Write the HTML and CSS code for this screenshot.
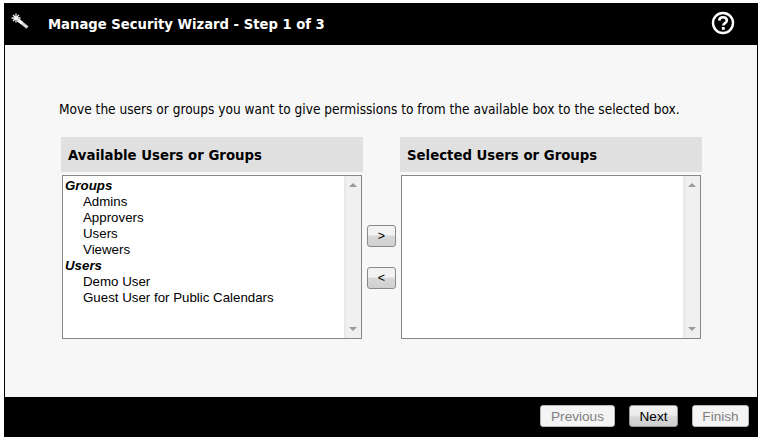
FILE: index.html
```html
<!DOCTYPE html>
<html lang="en">
<head>
<meta charset="utf-8">
<title>Manage Security Wizard</title>
<link rel="stylesheet" href="styles.css">
</head>
<body>
<div class="wizard">
  <header class="topbar">
    <svg class="wand" width="20" height="20" viewBox="0 0 20 20" aria-hidden="true">
      <path d="M8 8 L17.500 15.500" stroke="#d8d8d8" stroke-width="3"/>
      <path d="M8 8 L12 11.200" stroke="#fff" stroke-width="3"/>
      <path d="M6 1.500v9M1.500 6h9M3 3l6 6M9 3l-6 6" stroke="#f4f4fa" stroke-width="1.300"/>
    </svg>
    <h1 class="title">Manage Security Wizard - Step 1 of 3</h1>
    <svg class="help" width="24" height="24" viewBox="0 0 24 24" aria-hidden="true">
      <circle cx="12" cy="12" r="10" fill="none" stroke="#fff" stroke-width="2.400"/>
      <path d="M8.200 9.600C8.400 7.300 10 6.300 12 6.300c2.300 0 3.800 1.300 3.800 3.200 0 2.600-3.500 2.600-3.500 5.100" fill="none" stroke="#fff" stroke-width="2.600"/>
      <rect x="10.900" y="16" width="2.800" height="2.800" fill="#fff"/>
    </svg>
  </header>
  <main class="content">
    <p class="intro">Move the users or groups you want to give permissions to from the available box to the selected box.</p>
    <div class="picker">
      <section class="panel">
        <h2 class="panel-head">Available Users or Groups</h2>
        <div class="listbox">
          <ul class="items">
            <li class="group">Groups</li>
            <li class="item">Admins</li>
            <li class="item">Approvers</li>
            <li class="item">Users</li>
            <li class="item">Viewers</li>
            <li class="group">Users</li>
            <li class="item">Demo User</li>
            <li class="item">Guest User for Public Calendars</li>
          </ul>
          <div class="scrollbar"><span class="arrow up"></span><span class="arrow down"></span></div>
        </div>
      </section>
      <div class="movers">
        <button class="move" type="button">&gt;</button>
        <button class="move" type="button">&lt;</button>
      </div>
      <section class="panel">
        <h2 class="panel-head">Selected Users or Groups</h2>
        <div class="listbox">
          <ul class="items"></ul>
          <div class="scrollbar"><span class="arrow up"></span><span class="arrow down"></span></div>
        </div>
      </section>
    </div>
  </main>
  <footer class="bottombar">
    <button class="nav prev" type="button" disabled>Previous</button>
    <button class="nav next" type="button">Next</button>
    <button class="nav finish" type="button" disabled>Finish</button>
  </footer>
</div>
</body>
</html>
```
FILE: styles.css
```css
* { box-sizing: border-box; }
html, body { margin: 0; height: 100%; background: #fff; overflow: hidden; }
body { padding: 3px 8px 8px 4px; }
.wizard {
  width: 754px;
  height: 434px;
  display: flex;
  flex-direction: column;
  background: #000;
}
.topbar {
  height: 42px;
  flex: none;
  display: flex;
  align-items: center;
  padding: 0 23px 0 6px;
}
.wand { flex: none; margin-top: -4px; }
.title {
  margin: 0 0 0 18px;
  flex: 1;
  font: bold 13.200px "DejaVu Sans", sans-serif;
  color: #fff;
}
.help { flex: none; margin-top: -2px; }
.content {
  flex: 1;
  margin: 0 1px;
  background: #f7f7f7;
  padding: 55px 54px 0 56px;
}
.intro {
  margin: 0 0 19px -2px;
  font: 13.570px/18px "DejaVu Sans Condensed", "DejaVu Sans", sans-serif;
  color: #000;
}
.picker { display: flex; align-items: flex-start; }
.panel { width: 302px; flex: none; }
.panel-head {
  margin: 0 0 3px;
  height: 35px;
  background: #e0e0e0;
  padding: 0 7px;
  font: bold 13.300px/38px "DejaVu Sans", sans-serif;
  color: #000;
}
.listbox {
  margin: 0 1px;
  height: 164px;
  border: 1px solid #828790;
  background: #fff;
  display: flex;
}
.items {
  flex: 1;
  list-style: none;
  margin: 0;
  padding: 2px 0 0 2px;
  font: 13.300px/16px "Liberation Sans", Arial, sans-serif;
  color: #000;
}
.group { font-weight: bold; font-style: italic; }
.item { padding-left: 18px; }
.scrollbar {
  width: 17px;
  flex: none;
  display: flex;
  flex-direction: column;
  justify-content: space-between;
  align-items: center;
  padding: 7px 0;
  background: linear-gradient(to right, #e6e6e6, #f0f0f0 20%, #f0f0f0);
}
.arrow { width: 0; height: 0; border-left: 4px solid transparent; border-right: 4px solid transparent; }
.up { border-bottom: 4px solid #9a9a9a; }
.down { border-top: 4px solid #9a9a9a; }
.movers {
  width: 37px;
  flex: none;
  display: flex;
  flex-direction: column;
  gap: 20px;
  padding: 88px 0 0 4px;
}
.move {
  width: 29px;
  height: 22px;
  padding: 0;
  border: 1px solid #8a8a8a;
  border-radius: 3px;
  background: linear-gradient(to bottom, #f2f2f2 0, #f2f2f2 45%, #d8d8d8 50%, #d0d0d0 100%);
  font: 12.500px "Liberation Sans", Arial, sans-serif;
  color: #000;
}
.bottombar {
  height: 40px;
  flex: none;
  display: flex;
  align-items: flex-start;
  justify-content: flex-end;
  padding: 8px 9px 0 0;
  gap: 14px;
}
.nav {
  height: 22px;
  padding: 0;
  border: 1px solid #9a9a9a;
  border-radius: 3px;
  font: 13.600px "Liberation Sans", Arial, sans-serif;
}
.prev { width: 75px; }
.next { width: 49px; }
.finish { width: 57px; }
.nav:disabled { background: #f4f4f4; color: #808080; border-color: #b8b8b8; }
.next {
  color: #000;
  background: linear-gradient(to bottom, #f2f2f2 0, #ececec 45%, #d8d8d8 55%, #cfcfcf 100%);
}
```
